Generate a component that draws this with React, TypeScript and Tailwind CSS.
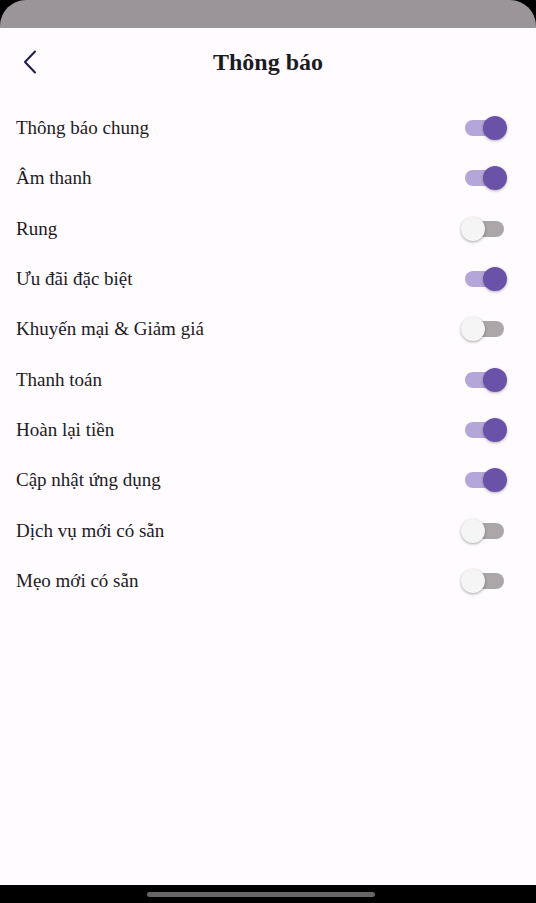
const items: [string, boolean][] = [
  ["Thông báo chung", true],
  ["Âm thanh", true],
  ["Rung", false],
  ["Ưu đãi đặc biệt", true],
  ["Khuyến mại & Giảm giá", false],
  ["Thanh toán", true],
  ["Hoàn lại tiền", true],
  ["Cập nhật ứng dụng", true],
  ["Dịch vụ mới có sẵn", false],
  ["Mẹo mới có sẵn", false],
];

function Toggle({ on }: { on: boolean }) {
  return (
    <div className="relative w-[40px] h-[24px] flex items-center">
      <div
        className={
          on
            ? "w-[38px] h-[16px] rounded-full bg-[#b3a6d8]"
            : "w-[39px] h-[16px] rounded-full bg-[#aba7a9]"
        }
      />
      {on ? (
        <div className="absolute left-[18px] top-0 w-[24px] h-[24px] rounded-full bg-[#6a52a8] shadow-[0_1px_3px_rgba(0,0,0,0.3)]" />
      ) : (
        <div className="absolute left-[-4px] top-0 w-[24px] h-[24px] rounded-full bg-[#f5f5f5] shadow-[0_1px_3px_rgba(0,0,0,0.35)]" />
      )}
    </div>
  );
}

export default function App() {
  return (
    <div className="w-[536px] h-[903px] bg-black flex flex-col overflow-hidden font-['Liberation_Serif',serif]">
      <div className="h-[28px] bg-[#9a9598] rounded-t-[26px]" />
      <div className="flex-1 bg-[#fffbfe] flex flex-col">
        <div className="h-[68px] relative flex items-center justify-center">
          <button className="absolute left-[18px] top-[22px] w-[24px] h-[24px] flex items-center justify-center">
            <svg width="14" height="24" viewBox="0 0 14 24" fill="none">
              <path d="M12 1.5 L2 12 L12 22.5" stroke="#1f1b4d" strokeWidth="2" strokeLinecap="round" strokeLinejoin="round" />
            </svg>
          </button>
          <h1 className="text-[24px] font-bold text-[#1c1b1f]">Thông báo</h1>
        </div>
        <div className="pt-[7px]">
          {items.map(([label, on]) => (
            <div key={label} className="h-[50.33px] flex items-center justify-between pl-[16px] pr-[31px]">
              <span className="text-[19px] text-[#1c1b1f]">{label}</span>
              <Toggle on={on} />
            </div>
          ))}
        </div>
      </div>
      <div className="h-[18px] bg-black flex items-center pl-[147px]">
        <div className="w-[228px] h-[5px] rounded-full bg-[#666666]" />
      </div>
    </div>
  );
}
